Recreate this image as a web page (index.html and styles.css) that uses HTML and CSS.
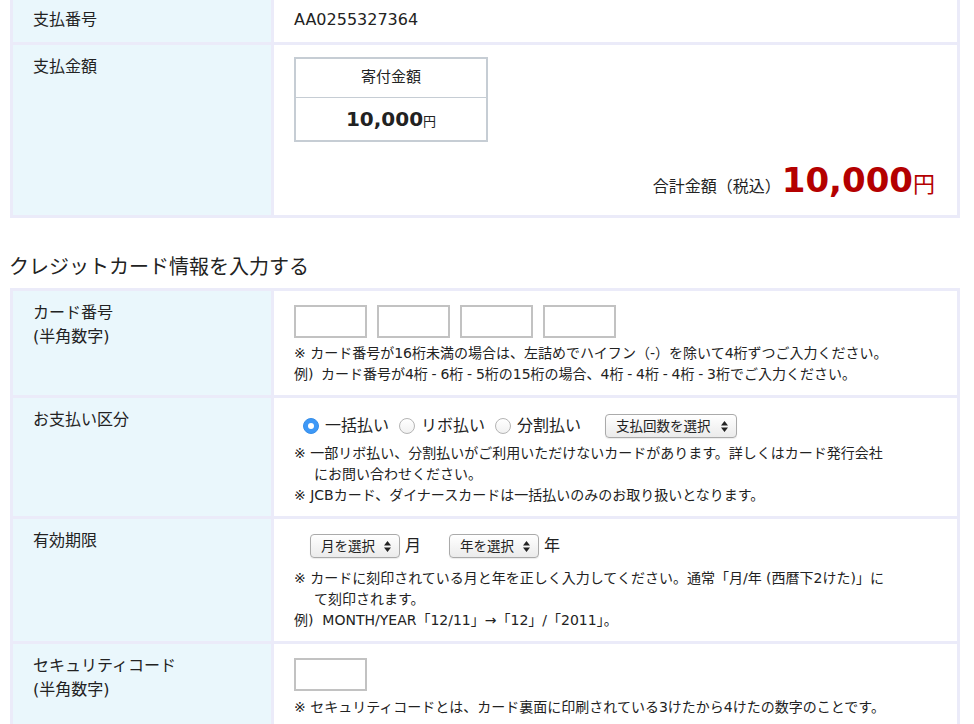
FILE: index.html
```html
<!DOCTYPE html>
<html lang="ja">
<head>
<meta charset="utf-8">
<title>お支払い</title>
<link rel="stylesheet" href="styles.css">
</head>
<body>
<table class="form-table first">
  <colgroup><col class="col-label"><col class="col-value"></colgroup>
  <tr>
    <th>支払番号</th>
    <td>AA0255327364</td>
  </tr>
  <tr>
    <th>支払金額</th>
    <td class="amount-cell">
      <div class="amount-box">
        <div class="amount-head">寄付金額</div>
        <div class="amount-val">10,000<span class="yen">円</span></div>
      </div>
      <div class="total">
        <span class="total-label">合計金額（税込）</span>
        <span class="total-num">10,000</span><span class="total-yen">円</span>
      </div>
    </td>
  </tr>
</table>

<h2 class="section-title">クレジットカード情報を入力する</h2>

<table class="form-table">
  <colgroup><col class="col-label"><col class="col-value"></colgroup>
  <tr>
    <th>カード番号<br>(半角数字)</th>
    <td>
      <div class="card-inputs">
        <input class="text-box" type="text">
        <input class="text-box" type="text">
        <input class="text-box" type="text">
        <input class="text-box" type="text">
      </div>
      <p class="note">※ カード番号が16桁未満の場合は、左詰めでハイフン（-）を除いて4桁ずつご入力ください。</p>
      <p class="note tight">例)&nbsp; カード番号が4桁 - 6桁 - 5桁の15桁の場合、4桁 - 4桁 - 4桁 - 3桁でご入力ください。</p>
    </td>
  </tr>
  <tr>
    <th>お支払い区分</th>
    <td>
      <div class="pay-options">
        <span class="radio on"></span><span class="radio-label">一括払い</span>
        <span class="radio"></span><span class="radio-label">リボ払い</span>
        <span class="radio"></span><span class="radio-label last">分割払い</span>
        <span class="select select-count">支払回数を選択
          <svg class="arrows" width="7" height="11" viewBox="0 0 7 11"><path d="M0 4.5 L3.5 0 L7 4.5 Z M0 6.5 L3.5 11 L7 6.5 Z" fill="#222"/></svg>
        </span>
      </div>
      <p class="note hang">※ 一部リボ払い、分割払いがご利用いただけないカードがあります。詳しくはカード発行会社<br>にお問い合わせください。</p>
      <p class="note hang">※ JCBカード、ダイナースカードは一括払いのみのお取り扱いとなります。</p>
    </td>
  </tr>
  <tr>
    <th>有効期限</th>
    <td>
      <div class="expiry">
        <span class="select select-date">月を選択
          <svg class="arrows" width="7" height="11" viewBox="0 0 7 11"><path d="M0 4.5 L3.5 0 L7 4.5 Z M0 6.5 L3.5 11 L7 6.5 Z" fill="#222"/></svg>
        </span>
        <span class="unit">月</span>
        <span class="select select-date">年を選択
          <svg class="arrows" width="7" height="11" viewBox="0 0 7 11"><path d="M0 4.5 L3.5 0 L7 4.5 Z M0 6.5 L3.5 11 L7 6.5 Z" fill="#222"/></svg>
        </span>
        <span class="unit">年</span>
      </div>
      <p class="note hang">※ カードに刻印されている月と年を正しく入力してください。通常「月/年 (西暦下2けた)」に<br>て刻印されます。</p>
      <p class="note">例)&nbsp; MONTH/YEAR「12/11」→「12」/「2011」。</p>
    </td>
  </tr>
  <tr>
    <th>セキュリティコード<br>(半角数字)</th>
    <td>
      <div class="card-inputs sec">
        <input class="text-box" type="text">
      </div>
      <p class="note">※ セキュリティコードとは、カード裏面に印刷されている3けたから4けたの数字のことです。</p>
    </td>
  </tr>
</table>
</body>
</html>
```

FILE: styles.css
```css
* { box-sizing: border-box; }

body {
  margin: 0;
  background: #fff;
  color: #222;
  font-family: "DejaVu Sans", "Noto Sans CJK JP", sans-serif;
  font-size: 16px;
}

.form-table {
  width: 950px;
  margin-left: 10px;
  border-collapse: separate;
  border-spacing: 3px;
  background: #ebebf9;
  table-layout: fixed;
}

.first { margin-top: -5px; }

.col-label { width: 258px; }

.form-table th {
  background: #eaf7fc;
  text-align: left;
  font-weight: normal;
  vertical-align: top;
  padding: 10px 20px;
  line-height: 24px;
}

.form-table td {
  background: #fff;
  vertical-align: top;
  padding: 10px 20px;
  line-height: 24px;
}

/* amount */
.form-table td.amount-cell { padding-bottom: 14px; }

.amount-box {
  width: 194px;
  margin-top: 2px;
  border: 2px solid #c6cdd4;
}

.amount-head {
  height: 39px;
  line-height: 36px;
  padding-bottom: 3px;
  text-align: center;
  font-size: 15px;
  border-bottom: 1px solid #c6cdd4;
}

.amount-val {
  height: 42px;
  line-height: 42px;
  text-align: center;
  font-size: 20px;
  font-weight: bold;
}

.amount-val .yen {
  font-size: 13px;
  font-weight: normal;
}

.total {
  display: flex;
  justify-content: flex-end;
  align-items: baseline;
  margin-top: 17px;
  height: 42px;
  line-height: 42px;
  padding-right: 2px;
}

.total-label { font-size: 16px; }

.total-num {
  font-size: 34px;
  font-weight: bold;
  color: #b40000;
  margin-left: 1px;
}

.total-yen {
  font-size: 22px;
  color: #b40000;
}

/* heading */
.section-title {
  font-size: 20px;
  font-weight: normal;
  line-height: 30px;
  margin: 34px 0 6px 9px;
}

/* inputs */
.card-inputs {
  display: flex;
  gap: 10px;
  margin: 4px 0 5px;
}

.card-inputs.sec { margin-top: 4px; margin-bottom: 6px; }

.text-box {
  width: 73px;
  height: 33px;
  margin: 0;
  padding: 0;
  border: 2px solid #c2c2c2;
  background: #fff;
  outline: none;
}

.note {
  margin: 0;
  font-size: 14px;
  line-height: 21px;
}

.note.tight { word-spacing: -0.7px; }

.note.hang {
  padding-left: 20px;
  text-indent: -20px;
}

/* payment options */
.pay-options {
  display: flex;
  align-items: center;
  height: 28px;
  margin: 4px 0 3px 9px;
}

.radio {
  flex: none;
  width: 16px;
  height: 16px;
  border-radius: 50%;
  border: 1px solid #b4b4b4;
  background: linear-gradient(#ffffff, #f1f1f1);
  margin-right: 6px;
}

.radio.on {
  display: flex;
  align-items: center;
  justify-content: center;
  background: #3d98f7;
  border-color: #378ee8;
}

.radio.on::after {
  content: "";
  width: 6px;
  height: 6px;
  border-radius: 50%;
  background: #fff;
}

.radio-label { margin-right: 10px; }
.radio-label.last { margin-right: 24px; }

.select {
  display: flex;
  align-items: center;
  justify-content: space-between;
  height: 24px;
  padding: 0 8px 0 10px;
  border: 1px solid #aaaaaa;
  border-radius: 4px;
  background: linear-gradient(#ffffff, #ebebeb);
  box-shadow: 0 1px 1px rgba(0, 0, 0, 0.08);
  font-size: 13.5px;
  line-height: 22px;
  white-space: nowrap;
}

.select-count { width: 132px; }
.select-date { width: 90px; }

.arrows { flex: none; }

/* expiry */
.expiry {
  display: flex;
  align-items: center;
  height: 30px;
  margin: 2px 0 7px 16px;
}

.unit { margin-left: 5px; margin-right: 28px; }
```
